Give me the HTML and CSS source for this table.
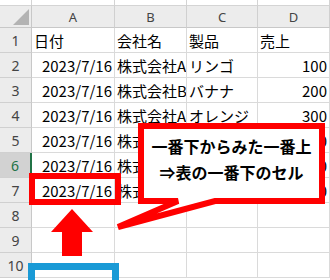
FILE: index.html
```html
<!DOCTYPE html>
<html lang="ja">
<head>
<meta charset="utf-8">
<title>Sheet</title>
<link rel="stylesheet" href="styles.css">
</head>
<body>
<div class="sheet">
  <div class="grid">
    <div class="top"></div><div class="top"></div><div class="top"></div><div class="top"></div><div class="top"></div>

    <div class="corner"><span class="tri"></span></div>
    <div class="ch">A</div><div class="ch">B</div><div class="ch">C</div><div class="ch">D</div>

    <div class="rh">1</div><div class="c">日付</div><div class="c">会社名</div><div class="c">製品</div><div class="c">売上</div>
    <div class="rh">2</div><div class="c r">2023/7/16</div><div class="c">株式会社A</div><div class="c">リンゴ</div><div class="c r">100</div>
    <div class="rh">3</div><div class="c r">2023/7/16</div><div class="c">株式会社B</div><div class="c">バナナ</div><div class="c r">200</div>
    <div class="rh">4</div><div class="c r">2023/7/16</div><div class="c">株式会社A</div><div class="c">オレンジ</div><div class="c r">300</div>
    <div class="rh">5</div><div class="c r">2023/7/16</div><div class="c">株式会社B</div><div class="c">リンゴ</div><div class="c r">400</div>
    <div class="rh sel">6</div><div class="c r">2023/7/16</div><div class="c">株式会社A</div><div class="c">バナナ</div><div class="c r">500</div>
    <div class="rh">7</div><div class="c r">2023/7/16</div><div class="c">株式会社B</div><div class="c">オレンジ</div><div class="c r">600</div>
    <div class="rh">8</div><div class="c"></div><div class="c"></div><div class="c"></div><div class="c"></div>
    <div class="rh">9</div><div class="c"></div><div class="c"></div><div class="c"></div><div class="c"></div>
    <div class="rh">10</div><div class="c"></div><div class="c"></div><div class="c"></div><div class="c"></div>
  </div>

  <svg class="marks" width="330" height="280" viewBox="0 0 330 280">
    <path d="M141,126 H322 V201 H215 L118,227 L178,201 H141 Z" fill="#ffffff" stroke="#ff0000" stroke-width="6"/>
    <polygon points="72,209 93,232 82,232 82,256 62,256 62,232 51,232" fill="#ff0000"/>
  </svg>
  <div class="callout-text">
    <div>一番下からみた一番上</div>
    <div>⇒表の一番下のセル</div>
  </div>
  <div class="redbox"></div>
  <div class="bluebox"></div>
</div>
</body>
</html>
```

FILE: styles.css
```css
html, body {
  margin: 0;
  padding: 0;
  background: #ffffff;
}

.sheet {
  position: relative;
  width: 330px;
  height: 280px;
  overflow: hidden;
  font-family: "Noto Sans CJK JP", "Noto Sans", sans-serif;
}

.grid {
  display: grid;
  grid-template-columns: 32px 83px 72px 71px 72px;
  grid-template-rows: 5px 23px repeat(10, 25px);
}

.top {
  background: #ffffff;
  border-right: 1px solid #d4d4d4;
  box-sizing: border-box;
}

.corner,
.ch,
.rh {
  background: #ececec;
  box-sizing: border-box;
  color: #444444;
  font-family: "Noto Sans", "Liberation Sans", sans-serif;
}

.corner {
  position: relative;
  border-right: 1px solid #c8c8c8;
  border-bottom: 1px solid #c8c8c8;
  border-top: 1px solid #d4d4d4;
}

.tri {
  position: absolute;
  right: 2px;
  bottom: 2px;
  width: 0;
  height: 0;
  border-left: 16px solid transparent;
  border-bottom: 16px solid #b3b3b3;
}

.ch {
  display: flex;
  align-items: center;
  justify-content: center;
  font-size: 13px;
  border-right: 1px solid #d0d0d0;
  border-bottom: 1px solid #c8c8c8;
  border-top: 1px solid #d4d4d4;
}

.rh {
  display: flex;
  align-items: center;
  justify-content: center;
  font-size: 14px;
  border-right: 1px solid #c8c8c8;
  border-bottom: 1px solid #d0d0d0;
}

.rh.sel {
  background: #d2d2d2;
  color: #217346;
  border-right: 2px solid #217346;
}

.c {
  display: flex;
  align-items: center;
  box-sizing: border-box;
  padding: 1px 2px 0 2px;
  font-size: 15px;
  color: #000000;
  white-space: nowrap;
  overflow: hidden;
  border-right: 1px solid #dadada;
  border-bottom: 1px solid #dadada;
}

.c.r {
  justify-content: flex-end;
  padding-right: 2px;
}

.marks {
  position: absolute;
  left: 0;
  top: 0;
}

.callout-text {
  position: absolute;
  left: 144px;
  top: 133px;
  width: 175px;
  text-align: center;
  font-size: 16px;
  font-weight: 700;
  line-height: 26px;
  color: #000000;
  white-space: nowrap;
}

.redbox {
  position: absolute;
  left: 29px;
  top: 173px;
  width: 92px;
  height: 32px;
  box-sizing: border-box;
  border: 6px solid #ff0000;
}

.bluebox {
  position: absolute;
  left: 28px;
  top: 263px;
  width: 91px;
  height: 30px;
  box-sizing: border-box;
  border: 7px solid #1a9ad6;
}
```
